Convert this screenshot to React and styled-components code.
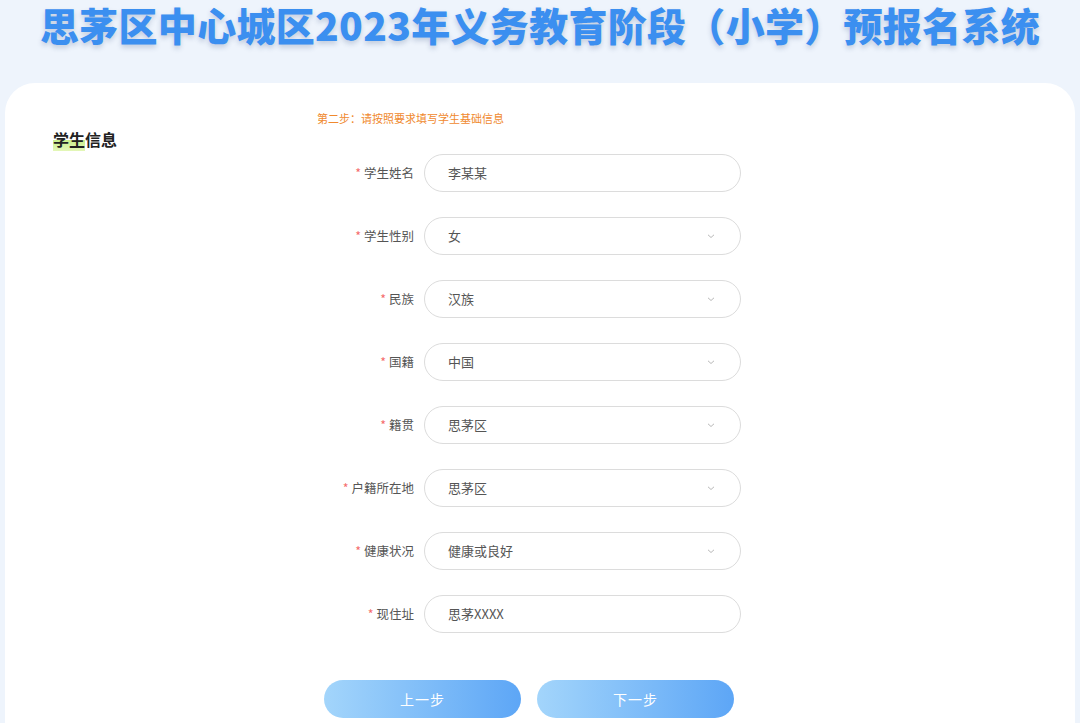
import React from 'react';
import styled, { createGlobalStyle } from 'styled-components';

const GlobalStyle = createGlobalStyle`
  html, body {
    margin: 0;
    padding: 0;
    background: #eef4fc;
    font-family: "Noto Sans CJK SC", "Noto Sans", sans-serif;
  }
`;

const Page = styled.div`
  width: 1080px;
  height: 723px;
  background: #eef4fc;
  display: flex;
  flex-direction: column;
`;

const Header = styled.h1`
  margin: -5px 0 0;
  height: 88px;
  flex-shrink: 0;
  text-align: center;
  white-space: nowrap;
  font-size: 39px;
  line-height: 58px;
  font-weight: 900;
  color: #3b8ff0;
  letter-spacing: 0.3px;
  text-shadow: 0 3px 5px rgba(40, 70, 120, 0.22);
`;

const Card = styled.div`
  margin: 0 5px;
  flex: 1;
  background: #fff;
  border-radius: 30px 30px 0 0;
  padding-top: 28px;
  box-sizing: border-box;
  display: grid;
  grid-template-columns: 312px 1fr;
  align-items: start;
`;

const Side = styled.div`
  padding: 17px 0 0 48px;
`;

const SectionTitle = styled.div`
  font-size: 16px;
  font-weight: 700;
  color: #222;
  line-height: 22px;
`;

const Mark = styled.span`
  background: linear-gradient(to bottom, transparent 55%, #c9ef8c 55%, #e4f7b8 100%);
`;

const Main = styled.div`
  display: flex;
  flex-direction: column;
`;

const Hint = styled.div`
  font-size: 11px;
  line-height: 16px;
  color: #f0892e;
  margin: -1px 0 28px;
`;

const Form = styled.div`
  display: flex;
  flex-direction: column;
  gap: 25px;
`;

const Row = styled.div`
  display: grid;
  grid-template-columns: 97px 317px;
  column-gap: 10px;
  align-items: center;
`;

const Label = styled.label`
  text-align: right;
  font-size: 12.5px;
  line-height: 20px;
  color: #555;
  white-space: nowrap;
`;

const Star = styled.span`
  color: #f56c6c;
  margin-right: 3px;
`;

const Field = styled.div`
  height: 38px;
  box-sizing: border-box;
  border: 1.5px solid #dcdcdc;
  border-radius: 19px;
  padding: 0 24px 0 23px;
  display: flex;
  align-items: center;
  justify-content: space-between;
  font-size: 13px;
  line-height: 20px;
  color: #555;
`;

const Chevron = styled.svg`
  width: 10px;
  height: 10px;
`;

const Buttons = styled.div`
  display: flex;
  gap: 16px;
  margin: 47px 0 0 7px;
`;

const Button = styled.button`
  width: 197px;
  height: 38px;
  border: none;
  border-radius: 19px;
  background: linear-gradient(to right, #a3d5fb, #5da6f6);
  color: #fff;
  font-size: 14px;
  line-height: 20px;
  font-family: inherit;
  letter-spacing: 1px;
`;

const fields = [
  { label: '学生姓名', value: '李某某' },
  { label: '学生性别', value: '女', select: true },
  { label: '民族', value: '汉族', select: true },
  { label: '国籍', value: '中国', select: true },
  { label: '籍贯', value: '思茅区', select: true },
  { label: '户籍所在地', value: '思茅区', select: true },
  { label: '健康状况', value: '健康或良好', select: true },
  { label: '现住址', value: '思茅XXXX' },
];

export default function App() {
  return (
    <Page>
      <GlobalStyle />
      <Header>思茅区中心城区2023年义务教育阶段（小学）预报名系统</Header>
      <Card>
        <Side>
          <SectionTitle><Mark>学生</Mark>信息</SectionTitle>
        </Side>
        <Main>
          <Hint>第二步：请按照要求填写学生基础信息</Hint>
          <Form>
            {fields.map(f => (
              <Row key={f.label}>
                <Label><Star>*</Star>{f.label}</Label>
                <Field>
                  <span>{f.value}</span>
                  {f.select && (
                    <Chevron viewBox="0 0 10 10">
                      <path d="M2 3.8 L5 6.5 L8 3.8" fill="none" stroke="#b8b8b8" strokeWidth="1" />
                    </Chevron>
                  )}
                </Field>
              </Row>
            ))}
          </Form>
          <Buttons>
            <Button>上一步</Button>
            <Button>下一步</Button>
          </Buttons>
        </Main>
      </Card>
    </Page>
  );
}
